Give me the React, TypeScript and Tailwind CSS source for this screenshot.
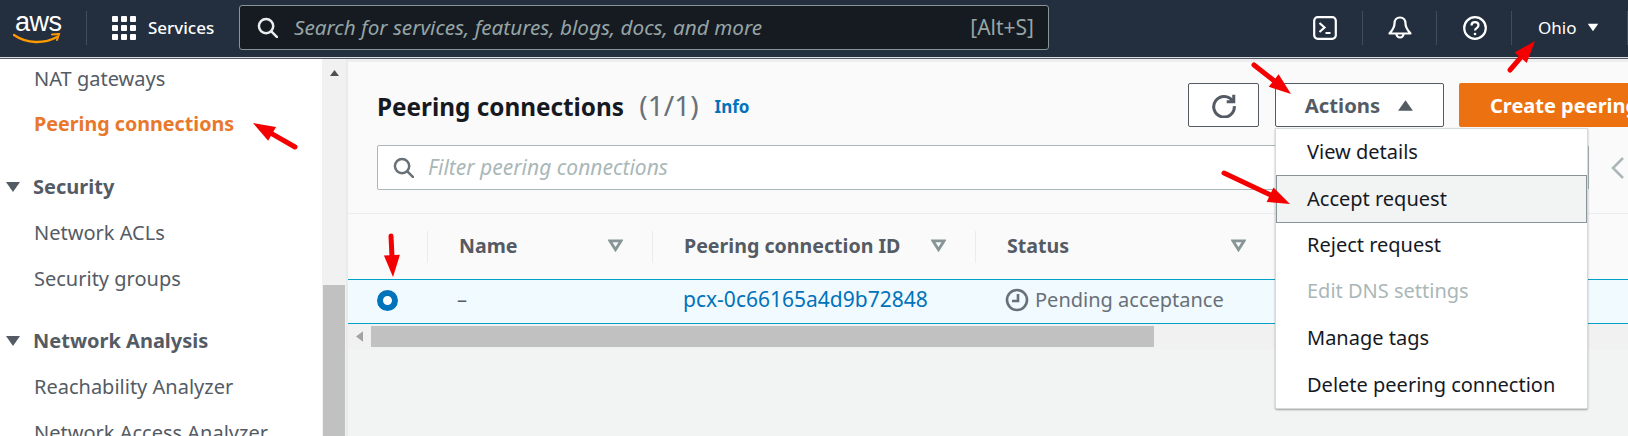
import type { ReactNode } from "react";

const font = { fontFamily: '"Noto Sans", sans-serif' };

function Caret({ className }: { className?: string }) {
  return (
    <svg viewBox="0 0 16 12" className={className}>
      <path d="M1 1h14L8 11z" fill="currentColor" />
    </svg>
  );
}

function SortCaret() {
  return (
    <svg viewBox="0 0 16 14" className="h-[13px] w-[15px] text-[#879596]">
      <path d="M2 2h12L8 11.5z" fill="none" stroke="currentColor" strokeWidth="3" />
    </svg>
  );
}

function SearchIcon({ className }: { className?: string }) {
  return (
    <svg viewBox="0 0 22 22" fill="none" stroke="currentColor" strokeWidth="2.6" className={className}>
      <circle cx="9.5" cy="9.5" r="7.5" />
      <path d="M15 15l6 6" strokeLinecap="round" />
    </svg>
  );
}

function Arrow({ x1, y1, x2, y2 }: { x1: number; y1: number; x2: number; y2: number }) {
  // shaft plus filled head, pointing at x2,y2
  const len = Math.hypot(x2 - x1, y2 - y1);
  const ux = (x2 - x1) / len;
  const uy = (y2 - y1) / len;
  const bx = x2 - ux * 22;
  const by = y2 - uy * 22;
  const head = `${x2},${y2} ${bx - uy * 8},${by + ux * 8} ${bx + uy * 8},${by - ux * 8}`;
  return (
    <g>
      <line x1={x1} y1={y1} x2={bx} y2={by} stroke="#f50000" strokeWidth="5" strokeLinecap="round" />
      <polygon points={head} fill="#f50000" />
    </g>
  );
}

function NavLink({ children, active }: { children: ReactNode; active?: boolean }) {
  return (
    <div className={`flex h-[46px] items-center pl-[34px] whitespace-nowrap ${active ? "pb-[2px] text-[19.7px] font-bold text-[#e8782c]" : "text-[20px] text-[#545b64]"}`}>
      {children}
    </div>
  );
}

function NavGroup({ children }: { children: ReactNode }) {
  return (
    <div className="flex h-[46px] items-center gap-[12px] pl-[5px] text-[20px] font-bold text-[#545b64]">
      <Caret className="h-[12px] w-[16px]" />
      {children}
    </div>
  );
}

function HeaderCell({ label, width }: { label: string; width: string }) {
  return (
    <div className={`flex h-[32px] shrink-0 items-center justify-between border-r border-[#eaeded] pb-[2px] pl-[31px] pr-[29px] text-[19.6px] font-bold text-[#545b64] ${width}`}>
      <span>{label}</span>
      <SortCaret />
    </div>
  );
}

function MenuItem({ children, hover, disabled }: { children: ReactNode; hover?: boolean; disabled?: boolean }) {
  return (
    <div
      className={`flex items-center border pl-[30px] text-[20px] ${
        hover ? "-mb-[2px] -mt-[1px] h-[48.7px] border-[#879596] bg-[#f2f3f3] pb-[1px]" : "h-[46.7px] border-transparent"
      } ${disabled ? "text-[#aab7b8]" : "text-[#16191f]"}`}
    >
      {children}
    </div>
  );
}

export default function App() {
  return (
    <div className="relative h-[436px] w-[1628px] overflow-hidden bg-white" style={font}>
      <header className="flex h-[59px] items-center border-b border-[#545b64] bg-[#232f3e] pb-[3px] text-white shadow-[inset_0_-1px_0_#d9dde0]">
        <div className="relative ml-[13px] h-[44px] w-[48px] shrink-0">
          <span className="absolute left-[2px] top-[-3px] text-[27px] leading-[38px] tracking-[-0.5px]" style={{ fontFamily: '"Liberation Sans", sans-serif' }}>aws</span>
          <svg viewBox="0 0 48 12" className="absolute left-0 top-[27px] h-[12px] w-[48px]">
            <path d="M1 2c13 9 30 9 43 2" fill="none" stroke="#f90" strokeWidth="2.4" strokeLinecap="round" />
            <path d="M39 1.5l7-.5-2 6" fill="none" stroke="#f90" strokeWidth="2" strokeLinecap="round" />
          </svg>
        </div>
        <div className="ml-[25px] h-[34px] w-px bg-[#414d5c]" />
        <div className="ml-[25px] grid w-[24px] shrink-0 grid-cols-3 gap-[3px]">
          {Array.from({ length: 9 }).map((_, i) => (
            <span key={i} className="h-[6px] w-[6px] rounded-[1px] bg-white" />
          ))}
        </div>
        <span className="ml-[12px] w-[66px] shrink-0 text-[17px] font-medium">Services</span>
        <div className="ml-[25px] flex h-[45px] w-[810px] shrink-0 items-center rounded-[3px] border border-[#879596] bg-[#161a21] pl-[17px] pr-[14px]">
          <SearchIcon className="h-[21px] w-[21px] text-[#eaeded]" />
          <span className="ml-[16px] text-[20.7px] italic text-[#95a5a6]">Search for services, features, blogs, docs, and more</span>
          <span className="ml-auto text-[21px] text-[#95a5a6]">[Alt+S]</span>
        </div>
        <div className="ml-auto flex h-[34px] items-center">
          <svg viewBox="0 0 24 24" className="h-[24px] w-[24px]" fill="none" stroke="white" strokeWidth="2.2">
            <rect x="1.2" y="1.2" width="21.6" height="21.6" rx="3.5" />
            <path d="M6.5 7l5 4.5-5 4.5M12.5 17h5" />
          </svg>
          <div className="ml-[25px] h-[34px] w-px bg-[#414d5c]" />
          <svg viewBox="0 0 24 24" className="ml-[25px] h-[24px] w-[24px]" fill="none" stroke="white" strokeWidth="2.2" strokeLinejoin="round">
            <path d="M12 1.5c-3.6 0-5.5 2.8-5.5 6 0 4.5-2 6.5-5 10h21c-3-3.5-5-5.5-5-10 0-3.2-1.9-6-5.5-6z" />
            <path d="M8.5 18a3.5 3.5 0 0 0 7 0" />
          </svg>
          <div className="ml-[24px] h-[34px] w-px bg-[#414d5c]" />
          <svg viewBox="0 0 24 24" className="ml-[26px] h-[24px] w-[24px]" fill="none" stroke="white" strokeWidth="2.2">
            <circle cx="12" cy="12" r="10.8" />
            <path d="M8.5 9.5c0-2 1.5-3.3 3.5-3.3s3.5 1.3 3.5 3.1c0 2.9-3.5 2.7-3.5 5.2" />
            <circle cx="12" cy="18" r="1.3" fill="white" stroke="none" />
          </svg>
          <div className="ml-[24px] h-[34px] w-px bg-[#414d5c]" />
          <span className="ml-[26px] w-[39px] text-[17px]">Ohio</span>
          <Caret className="ml-[10px] h-[9px] w-[12px]" />
          <div className="ml-[28px] h-[34px] w-px bg-[#414d5c]" />
        </div>
      </header>

      <div className="flex h-[377px]">
        <aside className="-mt-[3px] w-[322px] shrink-0">
          <NavLink>NAT gateways</NavLink>
          <NavLink active>Peering connections</NavLink>
          <div className="h-[16px]" />
          <NavGroup>Security</NavGroup>
          <NavLink>Network ACLs</NavLink>
          <NavLink>Security groups</NavLink>
          <div className="h-[16px]" />
          <NavGroup>Network Analysis</NavGroup>
          <NavLink>Reachability Analyzer</NavLink>
          <NavLink>Network Access Analyzer</NavLink>
        </aside>

        <div className="flex w-[24px] shrink-0 flex-col bg-[#f1f1f1]">
          <div className="flex h-[226px] justify-center pt-[11px]">
            <svg viewBox="0 0 12 8" className="h-[6px] w-[11px] text-[#505050]">
              <path d="M6 0l6 8H0z" fill="currentColor" />
            </svg>
          </div>
          <div className="mx-[1px] flex-1 bg-[#c1c1c1]" />
        </div>

        <main className="flex min-w-0 flex-1 flex-col border-l-2 border-[#e9ebeb] bg-[#f2f3f3]">
          <div className="h-[3px] bg-[#eeeeee]" />
          <section className="bg-[#fafafa] px-[29px] pt-[21px]">
            <div className="flex h-[44px] items-center">
              <h1 className="text-[24.3px] font-bold whitespace-nowrap text-[#16191f]">
                Peering connections <span className="ml-[9px] text-[28px] font-normal text-[#687078]">(1/1)</span>
              </h1>
              <span className="ml-[16px] mt-[3px] text-[17px] font-bold text-[#0073bb]">Info</span>
              <button className="ml-auto flex h-[44px] w-[71px] shrink-0 items-center justify-center rounded-[2px] border border-[#545b64] bg-white text-[#545b64]">
                <svg viewBox="0 0 24 24" className="h-[26px] w-[26px]" fill="none" stroke="currentColor" strokeWidth="2.8">
                  <path d="M20 8.5A9.5 9.5 0 1 0 21.5 13" />
                  <path d="M21 2.5V9h-6.5" strokeLinejoin="miter" />
                </svg>
              </button>
              <button className="ml-[16px] flex h-[44px] w-[169px] shrink-0 items-center justify-center gap-[17px] rounded-[2px] border border-[#545b64] bg-white pt-[1px] text-[20.3px] font-bold text-[#545b64]">
                Actions
                <Caret className="h-[13px] w-[17px] rotate-180" />
              </button>
              <button className="-mr-[160px] ml-[15px] h-[44px] w-[300px] shrink-0 rounded-[2px] bg-[#ec7211] pl-[31px] pt-[1px] text-left text-[20px] font-bold whitespace-nowrap text-white">
                Create peering connection
              </button>
            </div>
            <div className="mt-[18px] flex items-center">
              <div className="flex h-[45px] w-[1212px] shrink-0 items-center rounded-[2px] border border-[#aab7b8] bg-white pl-[15px]">
                <SearchIcon className="h-[21px] w-[21px] text-[#687078]" />
                <span className="ml-[14px] text-[21px] italic text-[#aab7b8]">Filter peering connections</span>
              </div>
              <svg viewBox="0 0 14 24" className="ml-[22px] h-[24px] w-[14px] shrink-0 text-[#aab7b8]" fill="none" stroke="currentColor" strokeWidth="2.5">
                <path d="M12 2L2 12l10 10" />
              </svg>
            </div>
            <div className="h-[23px]" />
          </section>

          <div className="flex h-[66px] items-center border-t border-[#eaeded] bg-[#fafafa]">
            <div className="h-[32px] w-[80px] shrink-0 border-r border-[#eaeded]" />
            <HeaderCell label="Name" width="w-[225px]" />
            <HeaderCell label="Peering connection ID" width="w-[323px]" />
            <HeaderCell label="Status" width="w-[300px]" />
          </div>

          <div className="flex h-[45px] items-center border-y border-[#00a1c9] bg-[#f1faff] pb-[3px] text-[20px]">
            <span className="ml-[29px] h-[21px] w-[21px] shrink-0 rounded-full border-[6px] border-[#0073bb] bg-white" />
            <span className="ml-[59px] w-[226px] shrink-0 text-[#545b64]">–</span>
            <span className="w-[322px] shrink-0 text-[21px] text-[#0073bb]">pcx-0c66165a4d9b72848</span>
            <svg viewBox="0 0 24 24" className="h-[24px] w-[24px] shrink-0 text-[#687078]" fill="none" stroke="currentColor" strokeWidth="2.6">
              <circle cx="12" cy="12" r="10" />
              <path d="M13 6v7H7" />
            </svg>
            <span className="ml-[6px] text-[#687078]">Pending acceptance</span>
          </div>

          <div className="flex h-[25px] items-start bg-[#f1f1f1] pt-[2px]">
            <svg viewBox="0 0 8 12" className="ml-[8px] mt-[5px] h-[11px] w-[7px] text-[#a3a3a3]">
              <path d="M0 6l8-6v12z" fill="currentColor" />
            </svg>
            <div className="ml-[8px] h-[21px] w-[783px] bg-[#c1c1c1]" />
          </div>
        </main>
      </div>

      <div className="absolute left-[1275px] top-[128px] h-[281px] w-[313px] rounded-b-[2px] border border-[#d5dbdb] bg-white shadow-[0_1px_2px_rgba(0,0,0,0.35)]">
        <MenuItem>View details</MenuItem>
        <MenuItem hover>Accept request</MenuItem>
        <MenuItem>Reject request</MenuItem>
        <MenuItem disabled>Edit DNS settings</MenuItem>
        <MenuItem>Manage tags</MenuItem>
        <MenuItem>Delete peering connection</MenuItem>
      </div>

      <svg className="pointer-events-none absolute inset-0 h-[436px] w-[1628px]" viewBox="0 0 1628 436">
        <Arrow x1={295} y1={147} x2={253} y2={123} />
        <Arrow x1={1254} y1={65} x2={1291} y2={94} />
        <Arrow x1={1510} y1={70} x2={1535} y2={41} />
        <Arrow x1={1224} y1={173} x2={1290} y2={204} />
        <Arrow x1={391} y1={236} x2={393} y2={277} />
      </svg>
    </div>
  );
}
